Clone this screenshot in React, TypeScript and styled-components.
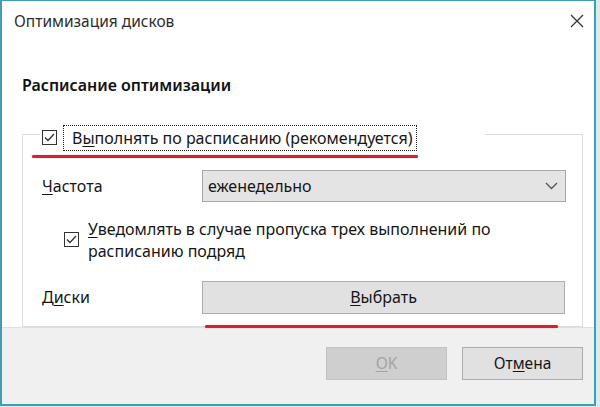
import styled, { createGlobalStyle } from 'styled-components';

const GlobalStyle = createGlobalStyle`
  html, body {
    margin: 0;
    padding: 0;
    background: #d6ecf1;
  }
  body {
    font-family: 'Noto Sans', 'Open Sans', sans-serif;
    color: #161616;
  }
`;

const Window = styled.div`
  position: relative;
  box-sizing: border-box;
  width: 596px;
  height: 406px;
  display: flex;
  flex-direction: column;
  background: #fff;
  border: 2px solid #3f9db4;
  border-top-width: 1px;
`;

const TitleBar = styled.div`
  height: 40px;
  display: flex;
  align-items: center;
  justify-content: space-between;
  padding: 0 10px 0 12px;
  font-size: 15.5px;
  color: #2d2d2d;
`;

const CloseButton = styled.button`
  all: unset;
  width: 14px;
  height: 14px;
  display: flex;
  svg {
    display: block;
  }
`;

const Content = styled.div`
  flex: 1;
  padding: 0 11px 0 20px;
`;

const Heading = styled.div`
  margin-top: 34px;
  font-size: 16px;
  line-height: 20px;
  font-weight: 600;
  color: #111;
`;

const Group = styled.fieldset`
  margin: 24px 0 0;
  padding: 0 16px 12px 19px;
  border: 1px solid #dcdcdc;
`;

const Legend = styled.legend`
  box-sizing: border-box;
  width: 445px;
  margin-left: -2px;
  padding: 6px 0 0;
  display: flex;
  align-items: center;
`;

const Box = styled.span<{ $inset?: number }>`
  box-sizing: border-box;
  flex: none;
  width: 15px;
  height: 15px;
  border: 1px solid #333;
  background: #fff;
  display: flex;
  align-items: center;
  justify-content: center;
  margin-left: ${(p) => p.$inset ?? 0}px;
`;

const FocusLabel = styled.span`
  margin-left: 6px;
  height: 26px;
  box-sizing: border-box;
  display: flex;
  align-items: center;
  padding: 0 3px 0 8px;
  border: 1px dotted #222;
  font-size: 16px;
`;

const Row = styled.div<{ $gap: number }>`
  display: flex;
  align-items: center;
  margin-top: ${(p) => p.$gap}px;
  font-size: 16px;
  line-height: 22px;
`;

const Label = styled.div`
  width: 160px;
  flex: none;
`;

const Select = styled.div`
  box-sizing: border-box;
  flex: 1;
  height: 32px;
  display: flex;
  align-items: center;
  justify-content: space-between;
  padding: 0 7px 0 5px;
  background: #e4e4e4;
  border: 1px solid #a9a9a9;
`;

const CheckRow = styled.div`
  display: flex;
  align-items: center;
  margin-top: 16px;
  padding-left: 22px;
  font-size: 16px;
`;

const CheckText = styled.div`
  margin-left: 9px;
  line-height: 22px;
`;

const Button = styled.button<{ $disabled?: boolean }>`
  all: unset;
  box-sizing: border-box;
  height: 33px;
  display: flex;
  align-items: center;
  justify-content: center;
  font-family: inherit;
  font-size: 15.5px;
  color: ${(p) => (p.$disabled ? '#a3a3a3' : '#161616')};
  background: ${(p) => (p.$disabled ? '#cfcfcf' : '#e1e1e1')};
  border: 1px solid ${(p) => (p.$disabled ? '#c2c2c2' : '#adadad')};
`;

const WideButton = styled(Button)`
  flex: 1;
  margin-right: 1px;
  font-size: 16px;
`;

const FooterButton = styled(Button)`
  width: 121px;
`;

const Footer = styled.div`
  height: 58px;
  display: flex;
  justify-content: flex-end;
  align-items: flex-start;
  gap: 15px;
  padding: 19px 11px 0 0;
  background: #f0f0f0;
  border-top: 1px solid #e0e0e0;
`;

const U = styled.span`
  text-decoration: underline;
  text-underline-offset: 2px;
`;

const Mark = styled.div<{ $left: number; $top: number; $width: number }>`
  position: absolute;
  left: ${(p) => p.$left}px;
  top: ${(p) => p.$top}px;
  width: ${(p) => p.$width}px;
  height: 3px;
  border-radius: 2px;
  background: #cf2331;
  box-shadow: 0 0 1px rgba(207, 35, 49, 0.6);
`;

const Check = () => (
  <svg width="11" height="9" viewBox="0 0 11 9">
    <polyline points="1,4.5 4,7.5 10,1" fill="none" stroke="#333" strokeWidth="1.3" />
  </svg>
);

const App = () => (
  <>
    <GlobalStyle />
    <Window>
      <TitleBar>
        <span>Оптимизация дисков</span>
        <CloseButton>
          <svg width="14" height="14" viewBox="0 0 14 14">
            <path d="M1 1L13 13M13 1L1 13" stroke="#333" strokeWidth="1.3" />
          </svg>
        </CloseButton>
      </TitleBar>
      <Content>
        <Heading>Расписание оптимизации</Heading>
        <Group>
          <Legend>
            <Box $inset={2}>
              <Check />
            </Box>
            <FocusLabel>
              В<U>ы</U>полнять по расписанию (рекомендуется)
            </FocusLabel>
          </Legend>
          <Row $gap={19}>
            <Label>
              <U>Ч</U>астота
            </Label>
            <Select>
              <span>еженедельно</span>
              <svg width="13" height="8" viewBox="0 0 13 8">
                <polyline points="1,1 6.5,6.5 12,1" fill="none" stroke="#555" strokeWidth="1.3" />
              </svg>
            </Select>
          </Row>
          <CheckRow>
            <Box>
              <Check />
            </Box>
            <CheckText>
              <U>У</U>ведомлять в случае пропуска трех выполнений по
              <br />
              расписанию подряд
            </CheckText>
          </CheckRow>
          <Row $gap={19}>
            <Label>
              Д<U>и</U>ски
            </Label>
            <WideButton>
              <U>В</U>ыбрать
            </WideButton>
          </Row>
        </Group>
      </Content>
      <Footer>
        <FooterButton $disabled>
          <U>O</U>K
        </FooterButton>
        <FooterButton>
          От<U>м</U>ена
        </FooterButton>
      </Footer>
      <Mark $left={30} $top={154} $width={386} />
      <Mark $left={203} $top={324} $width={353} />
    </Window>
  </>
);

export default App;
